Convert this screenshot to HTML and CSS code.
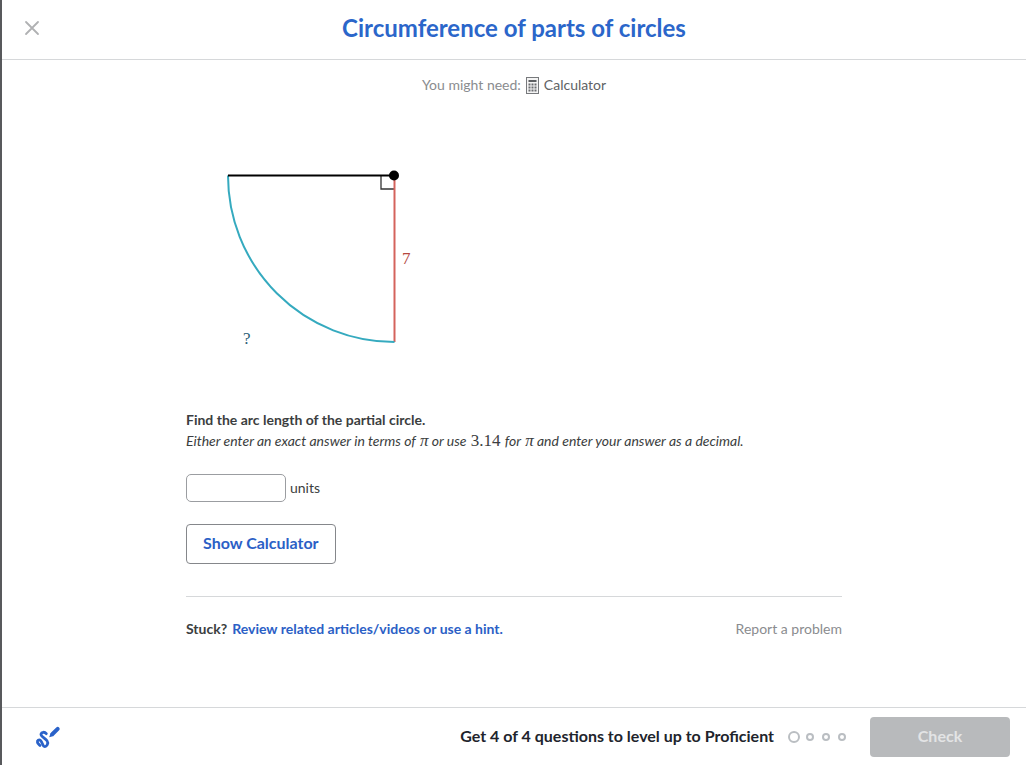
FILE: index.html
```html
<!DOCTYPE html>
<html lang="en">
<head>
<meta charset="utf-8">
<meta name="viewport" content="width=device-width, initial-scale=1">
<title>Circumference of parts of circles</title>
<link rel="stylesheet" href="styles.css">
</head>
<body>
<div class="modal">
  <header class="header">
    <button class="icon-button" type="button" aria-label="Close">
      <svg width="16" height="16" viewBox="0 0 16 16" fill="none" stroke="#b0b1b3" stroke-width="1.800" stroke-linecap="round"><path d="M2 2 14 14M14 2 2 14"/></svg>
    </button>
    <h1 class="title">Circumference of parts of circles</h1>
  </header>

  <main class="content">
    <p class="tools">
      <span>You might need:</span>
      <svg width="13" height="17" viewBox="0 0 13 17"><rect x=".5" y=".5" width="12" height="16" fill="#f4f4f4" stroke="#77797c"/><path d="M2.500 4h8" stroke="#5d5f62" stroke-width="2"/><path d="M2.500 7.500h8M2.500 10.500h8M2.500 13.500h8" stroke="#6b6d70" stroke-width="2" stroke-dasharray="2 1"/></svg>
      <span class="tool-name">Calculator</span>
    </p>

    <svg class="figure" width="250" height="220" viewBox="0 0 250 220" role="img" aria-label="Quarter circle with radius 7">
      <path d="M195 25v14h13" fill="none" stroke="#333" stroke-width="1.3"/>
      <path d="M208.500 26v166" stroke="#d4635c" stroke-width="2"/>
      <path d="M42 25.500A166.500 166.500 0 0 0 208.500 192" fill="none" stroke="#35aabf" stroke-width="2"/>
      <path d="M42 25.500h166" stroke="#000" stroke-width="2"/>
      <circle cx="208" cy="25.500" r="5" fill="#000"/>
      <text class="label side" x="216" y="114">7</text>
      <text class="label arc" x="57" y="194">?</text>
    </svg>

    <p class="question">Find the arc length of the partial circle.</p>
    <p class="instruction">Either enter an exact answer in terms of <span class="math pi">π</span> or use <span class="math">3.14</span> for <span class="math pi">π</span> and enter your answer as a decimal.</p>

    <div class="answer">
      <input class="answer-input" id="answer" type="text" autocomplete="off">
      <label for="answer">units</label>
    </div>

    <button class="button outline" type="button">Show Calculator</button>

    <div class="help">
      <p class="stuck">Stuck?<a href="#hint">Review related articles/videos or use a hint.</a></p>
      <a class="report" href="#report">Report a problem</a>
    </div>
  </main>

  <footer class="footer">
    <button class="icon-button scratchpad" type="button" aria-label="Scratchpad">
      <svg width="28" height="28" viewBox="0 0 28 28" fill="none" stroke="#2a62c9" stroke-linecap="round" stroke-linejoin="round"><path d="M12.300 10.700C10.500 8.500 7.500 9 7 11C6.500 13.500 11 15 13 17.800C15 20.500 12.500 24 10.300 23.500C8.500 23 8.500 19.500 6.500 17.500C5 16 3 17.500 3.500 19.500C3.800 20.500 5 21.500 6 22.500" stroke-width="2.800"/><path d="M18.500 11 23.700 5.800" stroke-width="4"/><path d="m15.200 14.300 1.400-4.400 3.200 3z" fill="#2a62c9" stroke="none"/></svg>
    </button>
    <p class="goal">Get 4 of 4 questions to level up to Proficient</p>
    <div class="progress"><i class="dot current"></i><i class="dot"></i><i class="dot"></i><i class="dot"></i></div>
    <button class="button check" type="button" disabled>Check</button>
  </footer>
</div>
</body>
</html>
```
FILE: styles.css
```css
* { box-sizing: border-box; }
body { margin: 0; font-family: Lato, sans-serif; font-size: 14px; line-height: 20px; color: #3b3e40; }
p, h1 { margin: 0; }
a { color: #2b60c6; text-decoration: none; }
button, input { font: inherit; }

.modal { display: flex; flex-direction: column; min-height: 100vh; background: #fff; border-left: 2px solid #58595c; }

.header { display: grid; grid-template-columns: 60px 1fr 60px; align-items: center; height: 60px; padding-bottom: 4px; border-bottom: 1px solid #d6d8da; }
.icon-button { display: grid; place-items: center; justify-self: center; padding: 0; border: 0; background: none; }
.title { font-size: 24px; line-height: 28px; font-weight: 700; text-align: center; color: #2b66ca; }

.content { flex: 1; width: 100%; max-width: 688px; margin: 0 auto; padding: 15px 16px; }
.tools { display: flex; justify-content: center; align-items: center; gap: 5px; color: #8a8c8f; }
.tool-name { color: #606265; }

.figure { display: block; margin-top: 55px; }
.label { font-family: "Liberation Serif", serif; font-size: 17px; }
.side { fill: #b5473f; }
.arc { fill: #2d6076; }

.question { margin-top: 40px; font-weight: 700; }
.instruction { line-height: 22px; font-style: italic; }
.math { padding: 0 1px; font-family: "Liberation Serif", serif; font-size: 17px; font-style: normal; line-height: 1; }
.pi { padding: 0 0 0 1px; font-style: italic; }

.answer { display: flex; align-items: center; gap: 4px; margin-top: 22px; }
.answer-input { width: 100px; height: 28px; padding: 0 8px; border: 1px solid #9b9da1; border-radius: 5px; background: #fff; }

.button { height: 40px; padding: 0 16px 2px; border-radius: 4px; font-size: 16px; font-weight: 700; }
.outline { margin-top: 22px; border: 1px solid #85878b; background: #fff; color: #2b60c6; }

.help { display: flex; justify-content: space-between; margin-top: 32px; padding-top: 22px; border-top: 1px solid #d6d8da; }
.stuck { display: flex; gap: 5px; font-weight: 700; }
.report { color: #8a8c8f; }

.footer { display: flex; align-items: center; height: 58px; padding: 0 16px; border-top: 1px solid #d6d8da; }
.scratchpad { margin: 0 auto 0 16px; }
.goal { padding-bottom: 2px; font-size: 16px; font-weight: 700; color: #21242c; }
.progress { display: flex; align-items: center; gap: 8px; margin: 0 24px 0 14px; }
.dot { width: 8px; height: 8px; border: 2px solid #babec2; border-radius: 50%; }
.current { width: 12px; height: 12px; margin-right: -2px; }
.check { width: 140px; border: 0; background: #b8babc; color: #e3e4e5; }
```
